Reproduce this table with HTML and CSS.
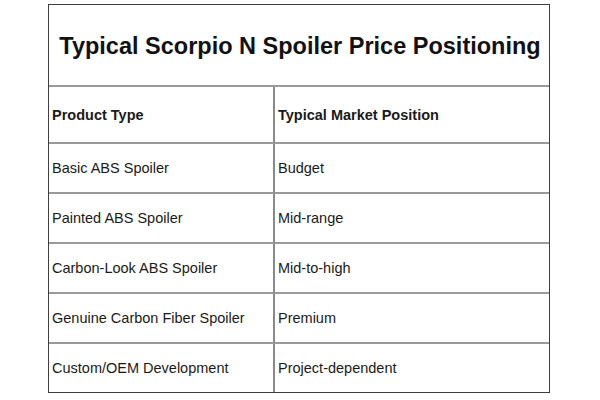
FILE: index.html
```html
<!DOCTYPE html>
<html>
<head>
<meta charset="utf-8">
<link rel="stylesheet" href="styles.css">
</head>
<body>
<div class="page">
  <div class="sheet">
    <div class="title">Typical Scorpio N Spoiler Price Positioning</div>
    <div class="grid">
      <div class="cell head left">Product Type</div>
      <div class="cell head">Typical Market Position</div>
      <div class="cell left">Basic ABS Spoiler</div>
      <div class="cell">Budget</div>
      <div class="cell left">Painted ABS Spoiler</div>
      <div class="cell">Mid-range</div>
      <div class="cell left">Carbon-Look ABS Spoiler</div>
      <div class="cell">Mid-to-high</div>
      <div class="cell left">Genuine Carbon Fiber Spoiler</div>
      <div class="cell">Premium</div>
      <div class="cell left last">Custom/OEM Development</div>
      <div class="cell last">Project-dependent</div>
    </div>
  </div>
</div>
</body>
</html>
```

FILE: styles.css
```css
html, body {
  margin: 0;
  padding: 0;
  background: #ffffff;
}
.page {
  width: 600px;
  height: 400px;
  padding: 4px 0 0 48px;
  box-sizing: border-box;
  font-family: "Liberation Sans", Arial, sans-serif;
  color: #1a1a1a;
}
.sheet {
  width: 502px;
  box-sizing: border-box;
  border: 1px solid #3f3f3f;
}
.title {
  height: 82px;
  border-bottom: 2px solid #9a9a9a;
  display: flex;
  align-items: center;
  justify-content: center;
  font-size: 23.5px;
  font-weight: bold;
  color: #111;
  padding-left: 2px;
  padding-top: 2px;
  box-sizing: border-box;
}
.grid {
  display: grid;
  grid-template-columns: 226px 1fr;
}
.cell {
  height: 48px;
  border-bottom: 2px solid #9a9a9a;
  display: flex;
  align-items: center;
  padding-left: 3px;
  font-size: 14.5px;
}
.cell.left {
  border-right: 2px solid #8a8a8a;
}
.cell.head {
  height: 55px;
  font-weight: bold;
}
.cell.last {
  border-bottom: none;
}
```
